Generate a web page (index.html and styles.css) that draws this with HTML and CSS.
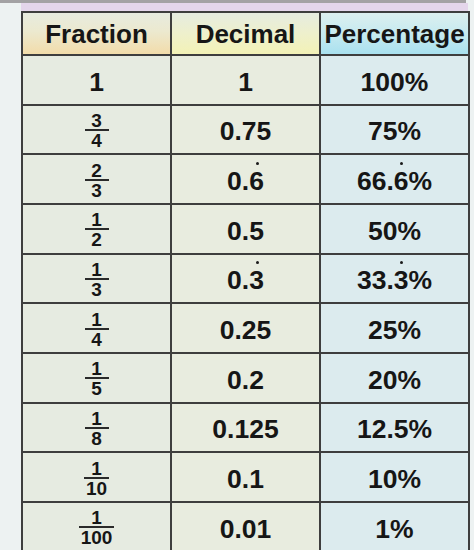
FILE: index.html
```html
<!DOCTYPE html>
<html lang="en">
<head>
<meta charset="utf-8">
<title>Fraction, Decimal and Percentage</title>
<link rel="stylesheet" href="styles.css">
</head>
<body>
<div class="topbar"></div>
<div class="sheet">
  <div class="band"></div>
  <table class="chart">
    <colgroup>
      <col class="c1"><col class="c2"><col class="c3">
    </colgroup>
    <thead>
      <tr class="head-row">
        <th class="h-frac">Fraction</th>
        <th class="h-dec">Decimal</th>
        <th class="h-pct">Percentage</th>
      </tr>
    </thead>
    <tbody>
      <tr><td class="f"><span class="whole">1</span></td><td class="d">1</td><td class="p">100%</td></tr>
      <tr><td class="f"><span class="frac"><span class="num">3</span><span class="den">4</span></span></td><td class="d">0.75</td><td class="p">75%</td></tr>
      <tr><td class="f"><span class="frac"><span class="num">2</span><span class="den">3</span></span></td><td class="d">0.<span class="rec">6</span></td><td class="p">66.<span class="rec">6</span>%</td></tr>
      <tr><td class="f"><span class="frac"><span class="num">1</span><span class="den">2</span></span></td><td class="d">0.5</td><td class="p">50%</td></tr>
      <tr><td class="f"><span class="frac"><span class="num">1</span><span class="den">3</span></span></td><td class="d">0.<span class="rec">3</span></td><td class="p">33.<span class="rec">3</span>%</td></tr>
      <tr><td class="f"><span class="frac"><span class="num">1</span><span class="den">4</span></span></td><td class="d">0.25</td><td class="p">25%</td></tr>
      <tr><td class="f"><span class="frac"><span class="num">1</span><span class="den">5</span></span></td><td class="d">0.2</td><td class="p">20%</td></tr>
      <tr><td class="f"><span class="frac"><span class="num">1</span><span class="den">8</span></span></td><td class="d">0.125</td><td class="p">12.5%</td></tr>
      <tr><td class="f"><span class="frac"><span class="num">1</span><span class="den">10</span></span></td><td class="d">0.1</td><td class="p">10%</td></tr>
      <tr><td class="f"><span class="frac"><span class="num">1</span><span class="den">100</span></span></td><td class="d">0.01</td><td class="p">1%</td></tr>
    </tbody>
  </table>
</div>
</body>
</html>
```

FILE: styles.css
```css
html, body {
  margin: 0;
  padding: 0;
}

body {
  background: #edf2f2;
  font-family: "Liberation Sans", Arial, sans-serif;
  color: #161616;
  width: 474px;
  height: 550px;
  overflow: hidden;
}

.topbar {
  height: 3px;
  width: 466px;
  background: #a3a2a4;
}

.sheet {
  margin-left: 21px;
  width: 447px;
}

.band {
  height: 8px;
  background: #e4d6eb;
}

.chart {
  border-collapse: collapse;
  width: 447px;
  table-layout: fixed;
}

.c1 { width: 149px; }
.c2 { width: 149px; }
.c3 { width: 149px; }

.chart tr {
  height: 49.67px;
}

.chart tr.head-row {
  height: 43px;
}

.chart th,
.chart td {
  border: 2px solid #3e3e3e;
  text-align: center;
  vertical-align: middle;
  padding: 0;
  font-weight: bold;
}

.chart th {
  font-size: 26px;
  padding-top: 1px;
}

.h-frac {
  background: linear-gradient(to bottom, #e7ebdf 0%, #ece9cf 45%, #f2dcaa 100%);
}

.h-dec {
  background: linear-gradient(to bottom, #e6ece0 0%, #eef0cc 50%, #f3f2b6 100%);
}

.h-pct {
  background: linear-gradient(to bottom, #dcefef 0%, #c6eaf0 50%, #a9e1ef 100%);
}

.chart td {
  font-size: 26.5px;
  line-height: 30px;
  padding-top: 4px;
}

.chart td.f {
  background: #e6ebe1;
  padding-top: 2px;
}

.chart td.d {
  background: #e8ecdf;
}

.chart td.p {
  background: #dcebee;
}

.frac {
  display: inline-flex;
  flex-direction: column;
  align-items: stretch;
  vertical-align: middle;
  font-size: 19px;
  line-height: 15px;
  min-width: 24px;
}

.frac .num {
  display: block;
  border-bottom: 2px solid #2a2a2a;
  padding: 0 2px 1px;
}

.frac .den {
  display: block;
  padding: 2px 2px 0;
}

.whole {
  display: inline-block;
  padding-top: 2px;
}

.rec {
  position: relative;
  display: inline-block;
}

.rec::before {
  content: "";
  position: absolute;
  left: 50%;
  top: -4px;
  width: 3px;
  height: 3px;
  margin-left: -1px;
  border-radius: 50%;
  background: #1a1a1a;
}
```
